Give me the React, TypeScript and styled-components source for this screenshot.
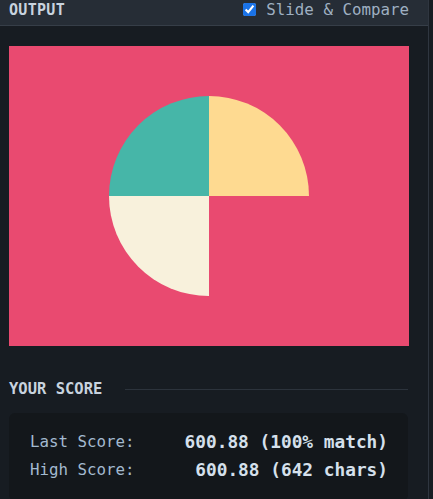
import React from "react";
import styled, { createGlobalStyle } from "styled-components";

const Global = createGlobalStyle`
  html, body { margin: 0; padding: 0; background: #171c22; }
  body { font-family: "DejaVu Sans Mono", "Liberation Mono", monospace; }
`;

const Shell = styled.div`
  width: 429px;
  min-height: 499px;
  border-right: 1px solid #2f3640;
  display: flex;
  flex-direction: column;
  box-sizing: border-box;
`;

const Header = styled.header`
  height: 26px;
  box-sizing: border-box;
  background: #262d36;
  border-bottom: 1px solid #363e48;
  display: flex;
  align-items: center;
  justify-content: space-between;
  padding: 0 19px 6px 9px;
`;

const Title = styled.h2`
  margin: 0;
  font-size: 15px;
  font-weight: bold;
  color: #c8d3df;
  letter-spacing: 0.3px;
`;

const Toggle = styled.label`
  display: flex;
  align-items: center;
  gap: 10px;
  font-size: 15.8px;
  color: #9fb0c2;
`;

const Check = styled.input`
  width: 13px;
  height: 13px;
  margin: 0;
  accent-color: #1a73e8;
`;

const Body = styled.main`
  padding: 20px 20px 0 9px;
  display: flex;
  flex-direction: column;
`;

const Canvas = styled.svg`
  display: block;
  width: 400px;
  height: 300px;
`;

const SectionHead = styled.div`
  margin-top: 34px;
  display: flex;
  align-items: center;
  gap: 23px;
`;

const SectionTitle = styled.h3`
  margin: 0;
  font-size: 15.5px;
  font-weight: bold;
  color: #c8d3df;
  white-space: nowrap;
`;

const Rule = styled.div`
  flex: 1;
  height: 1px;
  background: #2c333c;
`;

const Card = styled.div`
  margin-top: 15px;
  background: #13171b;
  border-radius: 6px;
  padding: 18px 20px 20px 21px;
  display: grid;
  grid-template-columns: auto 1fr;
  row-gap: 6px;
`;

const Label = styled.span`
  font-size: 15.8px;
  line-height: 22px;
  color: #a3bad0;
`;

const Value = styled.span`
  text-align: right;
  font-size: 17.8px;
  line-height: 22px;
  font-weight: bold;
  color: #d5e0ec;
`;

export default function App() {
  return (
    <>
      <Global />
      <Shell>
        <Header>
          <Title>OUTPUT</Title>
          <Toggle>
            <Check type="checkbox" defaultChecked />
            Slide &amp; Compare
          </Toggle>
        </Header>
        <Body>
          <Canvas viewBox="0 0 400 300">
            <rect width="400" height="300" fill="#e94a70" />
            <path d="M200 150 L100 150 A100 100 0 0 1 200 50 Z" fill="#46b6a8" />
            <path d="M200 150 L200 50 A100 100 0 0 1 300 150 Z" fill="#feda91" />
            <path d="M200 150 L200 250 A100 100 0 0 1 100 150 Z" fill="#f8f1dc" />
          </Canvas>
          <SectionHead>
            <SectionTitle>YOUR SCORE</SectionTitle>
            <Rule />
          </SectionHead>
          <Card>
            <Label>Last Score:</Label>
            <Value>600.88 (100% match)</Value>
            <Label>High Score:</Label>
            <Value>600.88 (642 chars)</Value>
          </Card>
        </Body>
      </Shell>
    </>
  );
}
